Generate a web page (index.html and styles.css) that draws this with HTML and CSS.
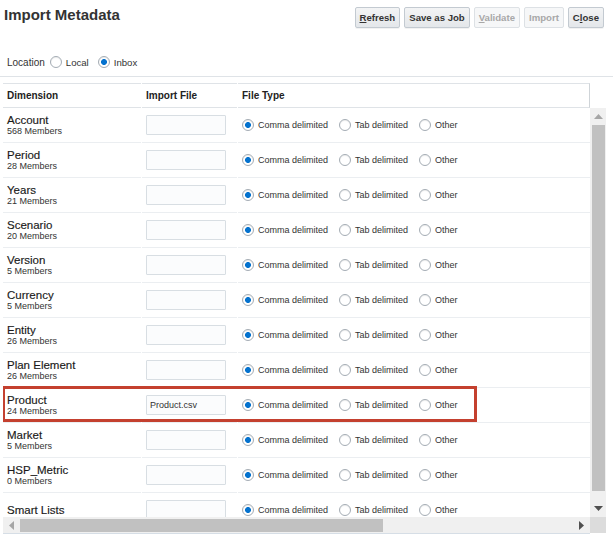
FILE: index.html
```html
<!DOCTYPE html>
<html lang="en">
<head>
<meta charset="utf-8">
<title>Import Metadata</title>
<link rel="stylesheet" href="styles.css">
</head>
<body>
<div class="page">
  <div class="topbar">
    <h1 class="title">Import Metadata</h1>
    <div class="actions">
      <button class="btn"><u>R</u>efresh</button>
      <button class="btn">Save as Job</button>
      <button class="btn disabled"><u>V</u>alidate</button>
      <button class="btn disabled">Import</button>
      <button class="btn">C<u>l</u>ose</button>
    </div>
  </div>

  <div class="location">
    <span class="loc-label">Location</span>
    <span class="opt"><span class="radio"></span>Local</span>
    <span class="opt"><span class="radio on"></span>Inbox</span>
  </div>

  <div class="panel">
    <div class="thead">
      <div class="th c1">Dimension</div>
      <div class="th c2">Import File</div>
      <div class="th c3 last">File Type</div>
    </div>

    <div class="viewport">
      <div class="rows">
        <div class="row">
          <div class="cell c1"><span class="name">Account</span><span class="members">568 Members</span></div>
          <div class="cell c2"><input class="file" type="text" value=""></div>
          <div class="cell c3"><span class="opt"><span class="radio on"></span>Comma delimited</span><span class="opt"><span class="radio"></span>Tab delimited</span><span class="opt"><span class="radio"></span>Other</span></div>
        </div>
        <div class="row">
          <div class="cell c1"><span class="name">Period</span><span class="members">28 Members</span></div>
          <div class="cell c2"><input class="file" type="text" value=""></div>
          <div class="cell c3"><span class="opt"><span class="radio on"></span>Comma delimited</span><span class="opt"><span class="radio"></span>Tab delimited</span><span class="opt"><span class="radio"></span>Other</span></div>
        </div>
        <div class="row">
          <div class="cell c1"><span class="name">Years</span><span class="members">21 Members</span></div>
          <div class="cell c2"><input class="file" type="text" value=""></div>
          <div class="cell c3"><span class="opt"><span class="radio on"></span>Comma delimited</span><span class="opt"><span class="radio"></span>Tab delimited</span><span class="opt"><span class="radio"></span>Other</span></div>
        </div>
        <div class="row">
          <div class="cell c1"><span class="name">Scenario</span><span class="members">20 Members</span></div>
          <div class="cell c2"><input class="file" type="text" value=""></div>
          <div class="cell c3"><span class="opt"><span class="radio on"></span>Comma delimited</span><span class="opt"><span class="radio"></span>Tab delimited</span><span class="opt"><span class="radio"></span>Other</span></div>
        </div>
        <div class="row">
          <div class="cell c1"><span class="name">Version</span><span class="members">5 Members</span></div>
          <div class="cell c2"><input class="file" type="text" value=""></div>
          <div class="cell c3"><span class="opt"><span class="radio on"></span>Comma delimited</span><span class="opt"><span class="radio"></span>Tab delimited</span><span class="opt"><span class="radio"></span>Other</span></div>
        </div>
        <div class="row">
          <div class="cell c1"><span class="name">Currency</span><span class="members">5 Members</span></div>
          <div class="cell c2"><input class="file" type="text" value=""></div>
          <div class="cell c3"><span class="opt"><span class="radio on"></span>Comma delimited</span><span class="opt"><span class="radio"></span>Tab delimited</span><span class="opt"><span class="radio"></span>Other</span></div>
        </div>
        <div class="row">
          <div class="cell c1"><span class="name">Entity</span><span class="members">26 Members</span></div>
          <div class="cell c2"><input class="file" type="text" value=""></div>
          <div class="cell c3"><span class="opt"><span class="radio on"></span>Comma delimited</span><span class="opt"><span class="radio"></span>Tab delimited</span><span class="opt"><span class="radio"></span>Other</span></div>
        </div>
        <div class="row">
          <div class="cell c1"><span class="name">Plan Element</span><span class="members">26 Members</span></div>
          <div class="cell c2"><input class="file" type="text" value=""></div>
          <div class="cell c3"><span class="opt"><span class="radio on"></span>Comma delimited</span><span class="opt"><span class="radio"></span>Tab delimited</span><span class="opt"><span class="radio"></span>Other</span></div>
        </div>
        <div class="row hl">
          <div class="cell c1"><span class="name">Product</span><span class="members">24 Members</span></div>
          <div class="cell c2"><input class="file" type="text" value="Product.csv"></div>
          <div class="cell c3"><span class="opt"><span class="radio on"></span>Comma delimited</span><span class="opt"><span class="radio"></span>Tab delimited</span><span class="opt"><span class="radio"></span>Other</span></div>
        </div>
        <div class="row">
          <div class="cell c1"><span class="name">Market</span><span class="members">5 Members</span></div>
          <div class="cell c2"><input class="file" type="text" value=""></div>
          <div class="cell c3"><span class="opt"><span class="radio on"></span>Comma delimited</span><span class="opt"><span class="radio"></span>Tab delimited</span><span class="opt"><span class="radio"></span>Other</span></div>
        </div>
        <div class="row">
          <div class="cell c1"><span class="name">HSP_Metric</span><span class="members">0 Members</span></div>
          <div class="cell c2"><input class="file" type="text" value=""></div>
          <div class="cell c3"><span class="opt"><span class="radio on"></span>Comma delimited</span><span class="opt"><span class="radio"></span>Tab delimited</span><span class="opt"><span class="radio"></span>Other</span></div>
        </div>
        <div class="row">
          <div class="cell c1"><span class="name">Smart Lists</span></div>
          <div class="cell c2"><input class="file" type="text" value=""></div>
          <div class="cell c3"><span class="opt"><span class="radio on"></span>Comma delimited</span><span class="opt"><span class="radio"></span>Tab delimited</span><span class="opt"><span class="radio"></span>Other</span></div>
        </div>
      </div>

      <div class="vscroll">
        <div class="sbtn"><svg width="9" height="5" viewBox="0 0 9 5"><polygon points="0,5 4.5,0 9,5" fill="#a6a6a6"/></svg></div>
        <div class="vthumb"></div>
        <div class="vspace"></div>
        <div class="sbtn"><svg width="9" height="5" viewBox="0 0 9 5"><polygon points="0,0 9,0 4.5,5" fill="#505050"/></svg></div>
      </div>
    </div>

    <div class="hrow">
      <div class="hscroll">
        <div class="hbtn"><svg width="5" height="9" viewBox="0 0 5 9"><polygon points="5,0 5,9 0,4.5" fill="#a6a6a6"/></svg></div>
        <div class="hthumb"></div>
        <div class="hspace"></div>
        <div class="hbtn"><svg width="5" height="9" viewBox="0 0 5 9"><polygon points="0,0 5,4.5 0,9" fill="#505050"/></svg></div>
      </div>
      <div class="corner"></div>
    </div>
  </div>
</div>
</body>
</html>
```

FILE: styles.css
```css
html, body {
  margin: 0;
  padding: 0;
  background: #ffffff;
}

body {
  font-family: "Liberation Sans", Arial, sans-serif;
  color: #333333;
}

.page {
  width: 613px;
}

.topbar {
  display: flex;
  justify-content: space-between;
  align-items: flex-start;
  height: 36px;
  padding: 0 9px 0 4px;
}

.title {
  margin: 0;
  padding-top: 6px;
  font-size: 15px;
  line-height: 18px;
  font-weight: bold;
  color: #333333;
}

.actions {
  display: flex;
  gap: 4px;
  margin-top: 7px;
}

.btn {
  height: 21px;
  padding: 0 4px;
  margin: 0;
  font-family: "Liberation Sans", Arial, sans-serif;
  font-size: 9.6px;
  font-weight: bold;
  color: #333333;
  border: 1px solid #c3cad1;
  border-radius: 2px;
  background: linear-gradient(#f3f4f5, #e4e7ea);
  box-shadow: 0 1px 0 rgba(0, 0, 0, 0.05);
}

.btn.disabled {
  color: #a8a8a8;
  border-color: #dde1e5;
  background: #f6f7f8;
  box-shadow: none;
}

.btn u {
  text-decoration: underline;
}

.location {
  display: flex;
  align-items: center;
  height: 20px;
  margin-top: 16px;
  padding-left: 7px;
  font-size: 10px;
  color: #333333;
}

.loc-label {
  margin-right: 5px;
}

.location .opt {
  margin-right: 9px;
  font-size: 9.6px;
}

.opt {
  display: inline-flex;
  align-items: center;
  gap: 4px;
  margin-right: 11px;
  font-size: 9px;
  color: #333333;
  white-space: nowrap;
}

.radio {
  display: inline-block;
  width: 12px;
  height: 12px;
  box-sizing: border-box;
  border: 1px solid #a4acb4;
  border-radius: 50%;
  background: #ffffff;
  box-shadow: inset 0 1px 1px rgba(0, 0, 0, 0.08);
  flex: none;
}

.radio.on {
  background: radial-gradient(circle, #0572ce 0, #0572ce 2.6px, #ffffff 3.3px);
}

.panel {
  margin-top: 4px;
  padding-top: 6px;
  padding-left: 3px;
  border-top: 1px solid #dfe3e7;
}

.thead {
  display: flex;
  gap: 1px;
  width: 587px;
  height: 25px;
}

.th {
  box-sizing: border-box;
  display: flex;
  align-items: center;
  padding-left: 4px;
  font-size: 10px;
  font-weight: bold;
  color: #222222;
  border-top: 1px solid #dfe3e7;
  border-bottom: 1px solid #dfe3e7;
}

.th.last {
  border-right: 1px solid #cfd4d8;
}

.c1 {
  width: 138px;
}

.c2 {
  width: 95px;
}

.c3 {
  width: 352px;
}

.viewport {
  display: flex;
  height: 409px;
}

.rows {
  width: 587px;
  overflow: hidden;
}

.row {
  position: relative;
  display: flex;
  gap: 1px;
  height: 35px;
}

.cell {
  box-sizing: border-box;
  display: flex;
  align-items: center;
  padding-left: 4px;
  border-bottom: 1px solid #ebeef1;
}

.cell.c1 {
  flex-direction: column;
  align-items: flex-start;
  justify-content: center;
}

.name {
  font-size: 11.5px;
  line-height: 12px;
  color: #1a1a1a;
  -webkit-text-stroke: 0.15px #1a1a1a;
}

.members {
  font-size: 9px;
  line-height: 10px;
  color: #333333;
}

.file {
  box-sizing: border-box;
  width: 80px;
  height: 20px;
  margin: 0;
  padding: 0 3px;
  border: 1px solid #d8dee3;
  border-radius: 1px;
  background: #fbfcfd;
  font-family: "Liberation Sans", Arial, sans-serif;
  font-size: 9px;
  color: #333333;
  outline: none;
}

.row.hl::after {
  content: "";
  position: absolute;
  left: -1px;
  top: -2px;
  width: 475px;
  height: 36px;
  box-sizing: border-box;
  border: 3px solid #c4402f;
  pointer-events: none;
}

.vscroll {
  display: flex;
  flex-direction: column;
  width: 16px;
  background: #f0f0f0;
}

.sbtn {
  display: flex;
  align-items: center;
  justify-content: center;
  height: 17px;
  flex: none;
}

.vthumb {
  width: 13px;
  height: 366px;
  margin-left: 2px;
  background: #c1c1c1;
  flex: none;
}

.vspace {
  flex: 1;
}

.hrow {
  display: flex;
}

.hscroll {
  display: flex;
  align-items: center;
  width: 587px;
  height: 16px;
  background: #f0f0f0;
  border-bottom: 1px solid #d6dee6;
}

.hbtn {
  display: flex;
  align-items: center;
  justify-content: center;
  width: 17px;
  height: 16px;
  flex: none;
}

.hthumb {
  width: 363px;
  height: 13px;
  margin-top: 1px;
  background: #c1c1c1;
  flex: none;
}

.hspace {
  flex: 1;
}

.corner {
  width: 16px;
  height: 16px;
  background: #dcdcdc;
}
```
